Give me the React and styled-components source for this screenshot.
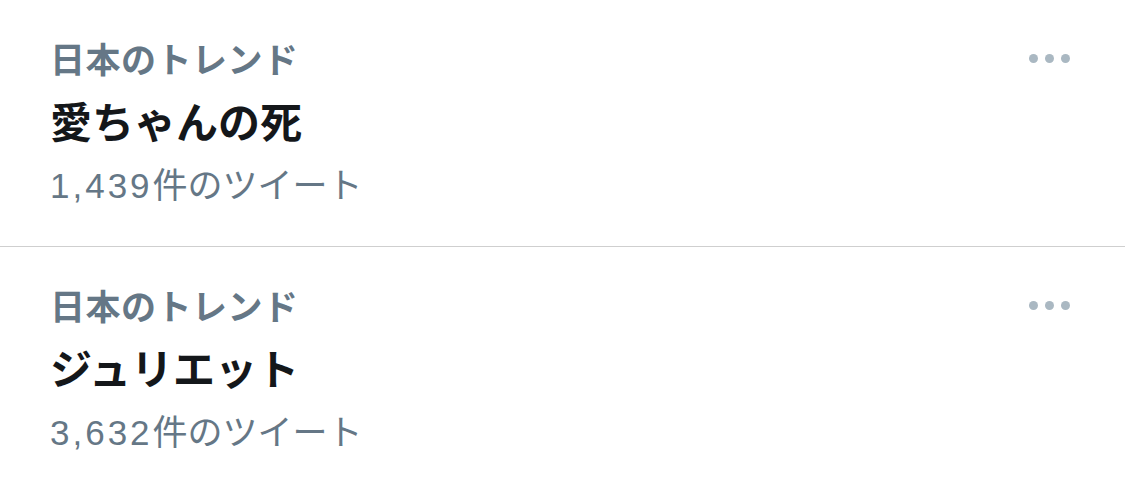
import React from "react";
import styled, { createGlobalStyle } from "styled-components";

const Global = createGlobalStyle`
  html, body { margin: 0; padding: 0; background: #fff; }
  body { font-family: "Noto Sans CJK JP", "Noto Sans", sans-serif; }
`;

const List = styled.div`
  width: 1125px;
  display: flex;
  flex-direction: column;
`;

const Row = styled.div`
  display: flex;
  justify-content: space-between;
  align-items: flex-start;
  padding: 35px 55px 33px 50px;
  border-bottom: ${(p) => (p.$last ? "none" : "1px solid #cfcfcf")};
`;

const Texts = styled.div`
  display: flex;
  flex-direction: column;
`;

const Label = styled.div`
  font-size: 35px;
  line-height: 46px;
  font-weight: 700;
  color: #657786;
  letter-spacing: 0.5px;
`;

const Title = styled.div`
  margin-top: 9px;
  font-size: 42px;
  line-height: 60px;
  font-weight: 700;
  color: #14171a;
`;

const Count = styled.div`
  margin-top: 3px;
  height: 60px;
  font-size: 35px;
  line-height: 60px;
  font-weight: 400;
  color: #657786;
`;

const Num = styled.span`
  font-family: "Liberation Sans", "Noto Sans CJK JP", sans-serif;
  line-height: 1;
  letter-spacing: 3px;
`;

const Dots = styled.div`
  display: flex;
  gap: 7px;
  margin-top: 19px;
`;

const Dot = styled.span`
  width: 9px;
  height: 9px;
  border-radius: 50%;
  background: #aab8c2;
`;

const items = [
  { title: "愛ちゃんの死", count: "1,439" },
  { title: "ジュリエット", count: "3,632" },
];

export default function App() {
  return (
    <List>
      <Global />
      {items.map((it, i) => (
        <Row key={i} $last={i === items.length - 1}>
          <Texts>
            <Label>日本のトレンド</Label>
            <Title>{it.title}</Title>
            <Count>
              <Num>{it.count}</Num>件のツイート
            </Count>
          </Texts>
          <Dots>
            <Dot />
            <Dot />
            <Dot />
          </Dots>
        </Row>
      ))}
    </List>
  );
}
